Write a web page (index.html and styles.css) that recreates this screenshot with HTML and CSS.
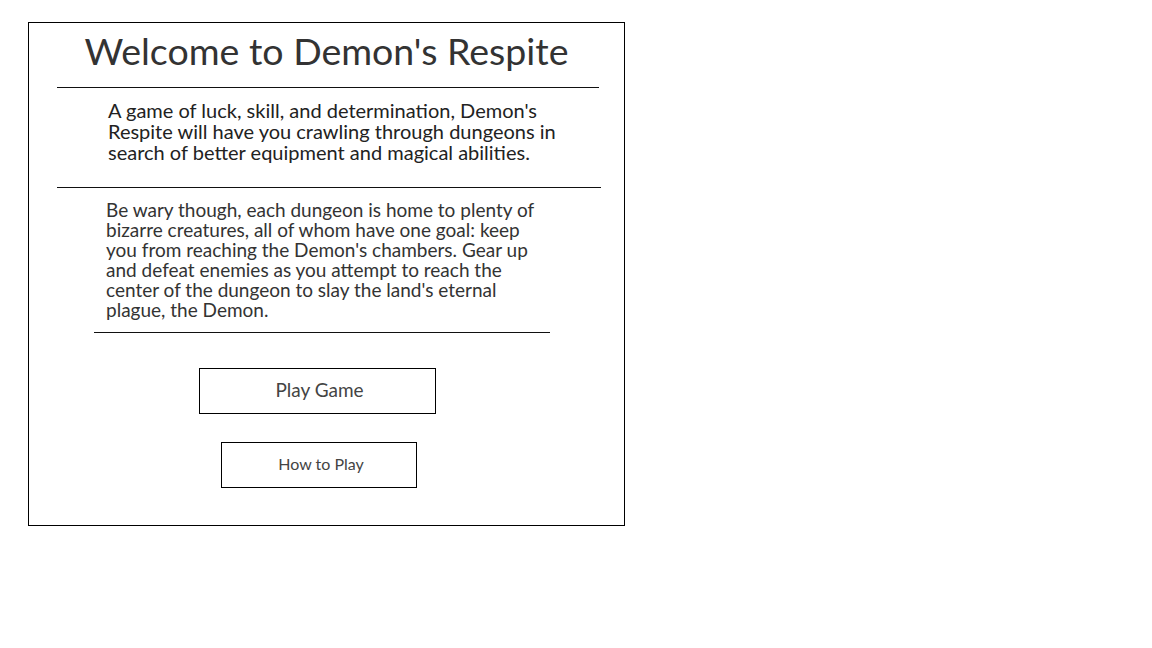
FILE: index.html
```html
<!DOCTYPE html>
<html lang="en">
<head>
<meta charset="utf-8">
<title>Demon's Respite</title>
<link rel="stylesheet" href="styles.css">
</head>
<body>
<main class="panel">
  <h1 class="title">Welcome to Demon's Respite</h1>
  <div class="rule rule-top"></div>
  <p class="intro">A game of luck, skill, and determination, Demon's Respite will have you crawling through dungeons in search of better equipment and magical abilities.</p>
  <div class="rule rule-mid"></div>
  <p class="lore">Be wary though, each dungeon is home to plenty of bizarre creatures, all of whom have one goal: keep you from reaching the Demon's chambers. Gear up and defeat enemies as you attempt to reach the center of the dungeon to slay the land's eternal plague, the Demon.</p>
  <div class="rule rule-low"></div>
  <div class="actions">
    <button class="btn btn-play">Play Game</button>
    <button class="btn btn-how">How to Play</button>
  </div>
</main>
</body>
</html>
```
FILE: styles.css
```css
html, body {
  margin: 0;
  padding: 0;
  background: #fff;
}
body {
  font-family: Lato, "Open Sans", sans-serif;
  color: #333;
}
.panel {
  margin: 22px 0 0 28px;
  width: 595px;
  height: 502px;
  border: 1px solid #000;
  display: flex;
  flex-direction: column;
}
.title {
  margin: 0;
  font-size: 37.5px;
  font-weight: 400;
  line-height: 55px;
  text-align: center;
  color: #333;
}
.rule {
  height: 0;
  border-top: 1px solid #111;
}
.rule-top {
  margin: 9px 0 0 28px;
  width: 542px;
}
.intro {
  margin: 12px 0 0 79px;
  width: 460px;
  font-size: 20px;
  line-height: 21px;
  color: #222;
}
.rule-mid {
  margin: 24px 0 0 28px;
  width: 544px;
}
.lore {
  margin: 12px 0 0 77px;
  width: 440px;
  font-size: 19px;
  line-height: 20px;
  color: #333;
}
.rule-low {
  margin: 12px 0 0 65px;
  width: 456px;
}
.actions {
  display: flex;
  flex-direction: column;
  margin-top: 35px;
}
.btn {
  font-family: Lato, "Open Sans", sans-serif;
  background: #fff;
  border: 1px solid #000;
  color: #444;
  height: 46px;
  padding: 0 0 4px 4px;
  cursor: pointer;
}
.btn-play {
  margin-left: 170px;
  width: 237px;
  font-size: 19px;
}
.btn-how {
  margin: 28px 0 0 192px;
  width: 196px;
  font-size: 16px;
}
```
